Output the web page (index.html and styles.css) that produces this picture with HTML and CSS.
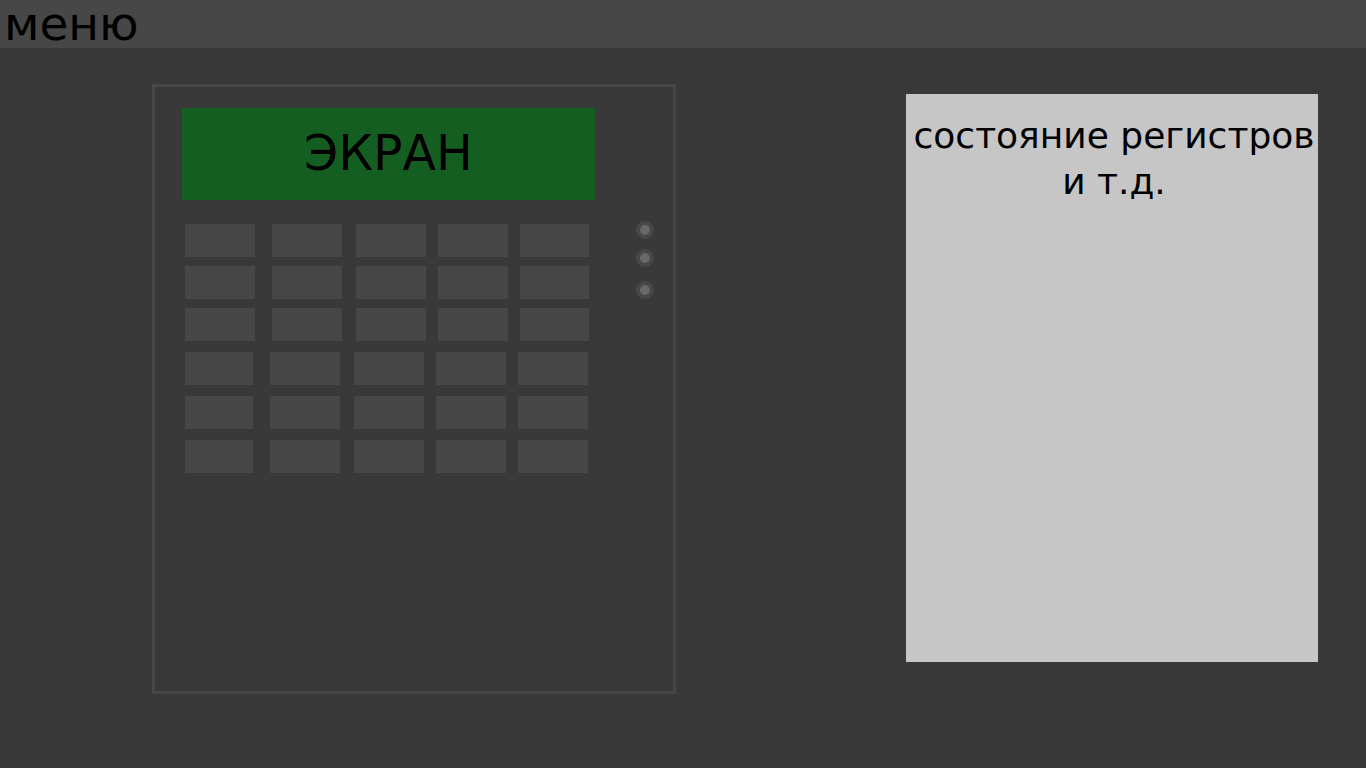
FILE: index.html
```html
<!DOCTYPE html>
<html lang="ru">
<head>
<meta charset="utf-8">
<meta name="viewport" content="width=device-width, initial-scale=1">
<title>Калькулятор</title>
<link rel="stylesheet" href="styles.css">
</head>
<body>
<header class="topbar">
  <button class="menu" type="button">меню</button>
</header>
<main class="workspace">
  <section class="device">
    <output class="screen">ЭКРАН</output>
    <div class="keypad">
      <div class="keys keys-upper">
        <div class="row"><button class="key" type="button"></button><button class="key" type="button"></button><button class="key" type="button"></button><button class="key" type="button"></button><button class="key" type="button"></button></div>
        <div class="row"><button class="key" type="button"></button><button class="key" type="button"></button><button class="key" type="button"></button><button class="key" type="button"></button><button class="key" type="button"></button></div>
        <div class="row"><button class="key" type="button"></button><button class="key" type="button"></button><button class="key" type="button"></button><button class="key" type="button"></button><button class="key" type="button"></button></div>
      </div>
      <div class="keys keys-lower">
        <div class="row"><button class="key" type="button"></button><button class="key" type="button"></button><button class="key" type="button"></button><button class="key" type="button"></button><button class="key" type="button"></button></div>
        <div class="row"><button class="key" type="button"></button><button class="key" type="button"></button><button class="key" type="button"></button><button class="key" type="button"></button><button class="key" type="button"></button></div>
        <div class="row"><button class="key" type="button"></button><button class="key" type="button"></button><button class="key" type="button"></button><button class="key" type="button"></button><button class="key" type="button"></button></div>
      </div>
    </div>
    <div class="leds">
      <span class="led"></span>
      <span class="led"></span>
      <span class="led led-apart"></span>
    </div>
  </section>
  <aside class="registers">
    <p class="registers-text">состояние регистров и т.д.</p>
  </aside>
</main>
</body>
</html>
```
FILE: styles.css
```css
* {
  box-sizing: border-box;
}

body {
  margin: 0;
  min-height: 100vh;
  display: flex;
  flex-direction: column;
  background: #393939;
  color: #000;
  font-family: "DejaVu Sans", sans-serif;
}

button {
  border: 0;
  padding: 0;
  color: inherit;
  font: inherit;
}

.topbar {
  display: flex;
  padding-left: 4px;
  background: #474747;
}

.menu {
  background: none;
  font-size: 47px;
  line-height: 48px;
}

.workspace {
  flex: 1;
  display: grid;
  grid-template-columns: 524fr 412fr;
  column-gap: 230px;
  padding: 36px 48px 74px 152px;
}

.device {
  display: grid;
  grid-template-columns: 1fr 18px;
  grid-template-rows: auto 1fr;
  column-gap: 41px;
  row-gap: 21px;
  padding: 21px 19px 21px 27px;
  border: 3px solid #474747;
}

.screen {
  grid-column: 1;
  padding: 18px 0;
  background: #155e21;
  font-size: 49px;
  line-height: 56px;
  text-align: center;
}

.keypad {
  grid-column: 1;
  display: flex;
  flex-direction: column;
  gap: 11px;
  padding: 3px 6px 0 3px;
}

.keys {
  display: flex;
  flex-direction: column;
}

.keys-upper {
  gap: 9px;
}

.keys-lower {
  gap: 11px;
  padding-right: 1px;
}

.row {
  display: flex;
  gap: 12px;
}

.key {
  flex: 70 1 0;
  height: 33px;
  background: #474747;
}

.key:nth-child(1) {
  margin-right: 5px;
}

.key:nth-child(2) {
  margin-right: 2px;
}

.keys-upper .key:last-child {
  flex-grow: 69;
}

.keys-lower .key:first-child {
  flex-grow: 68;
}

.leds {
  display: flex;
  flex-direction: column;
  gap: 10px;
}

.led {
  width: 18px;
  height: 18px;
  border: 4px solid #474747;
  border-radius: 50%;
  background: #686868;
}

.led-apart {
  margin-top: 4px;
}

.registers {
  margin: 10px 0 32px;
  padding: 19px 0 18px 4px;
  background: #c6c6c6;
}

.registers-text {
  margin: 0;
  font-size: 36px;
  line-height: 46px;
  text-align: center;
}
```
